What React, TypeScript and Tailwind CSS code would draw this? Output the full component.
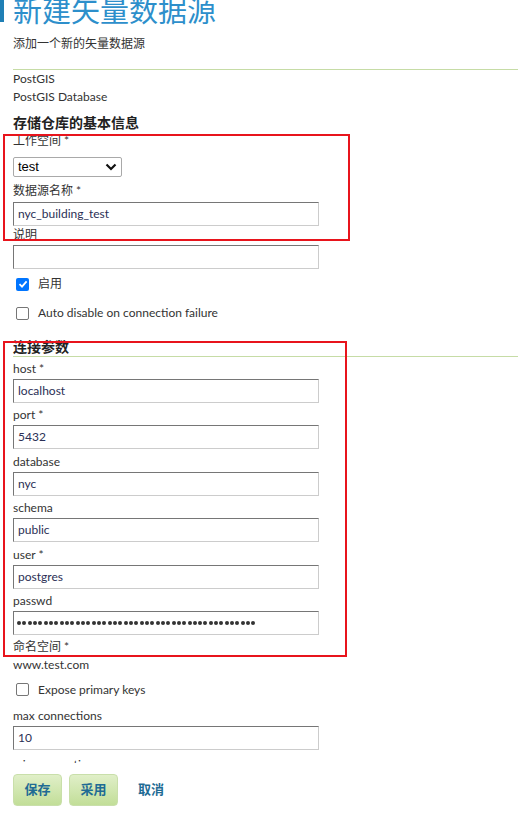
import React from "react";

const inputCls =
  "h-[24px] w-[306px] border border-t-[#767676] border-l-[#767676] border-b-[#cccccc] border-r-[#cccccc] px-[4px] flex items-center text-[12px] text-[#2b2f55] bg-white";

const Field = ({ label, value, req }: { label: string; value: string; req?: boolean }) => (
  <div className="mb-[3.4px]">
    <div className="h-[18px] leading-[18px]">
      {label}
      {req && " *"}
    </div>
    <div className={"mt-[1px] " + inputCls}>{value}</div>
  </div>
);

const Check = ({ checked }: { checked?: boolean }) =>
  checked ? (
    <span className="block w-[13px] h-[13px] rounded-[2px] bg-[#0075ff] flex items-center justify-center">
      <svg width="10" height="10" viewBox="0 0 10 10">
        <path d="M1.5 5.2 L4 7.6 L8.6 2.4" stroke="white" strokeWidth="1.8" fill="none" />
      </svg>
    </span>
  ) : (
    <span className="block w-[13px] h-[13px] rounded-[2px] border border-[#767676] bg-white" />
  );

export default function App() {
  return (
    <div
      className="relative w-[518px] h-[814px] overflow-hidden bg-white text-[12px] text-[#333]"
      style={{ fontFamily: 'Lato, "Noto Sans CJK SC", sans-serif' }}
    >
      <div className="h-[763px] overflow-hidden">
        <div className="flex h-[22px] border-l-[4px] border-[#1f7fb5] pl-[9px]">
          <h1
            className="-mt-[6px] text-[29px] leading-[30px] text-[#2d8fcb] whitespace-nowrap"
            style={{ fontFamily: '"Noto Sans CJK SC", sans-serif' }}
          >
            新建矢量数据源
          </h1>
        </div>
        <div className="px-[13px]">
          <p className="mt-[14px] leading-[16px]">添加一个新的矢量数据源</p>
          <div className="mt-[17px] h-[1px] bg-[#c6dca6] -mr-[13px]" />
          <div className="leading-[18px]">PostGIS</div>
          <div className="leading-[18px]">PostGIS Database</div>
          <h2 className="mt-[8px] text-[14px] font-bold leading-[18px] text-[#222]">存储仓库的基本信息</h2>

          <div className="h-[18px] leading-[18px]">工作空间 *</div>
          <div
            className="mt-[7px] h-[20px] w-[109px] border border-[#a9a9a9] rounded-[2px] flex items-center justify-between px-[4px] text-[13px] text-black"
            style={{ fontFamily: '"Liberation Sans", sans-serif' }}
          >
            <span>test</span>
            <svg width="12" height="8" viewBox="0 0 12 8">
              <path d="M1.5 1.5 L6 6 L10.5 1.5" stroke="#111" strokeWidth="2.2" fill="none" />
            </svg>
          </div>

          <div className="mt-[5px] h-[18px] leading-[18px]">数据源名称 *</div>
          <div className={"mt-[2px] " + inputCls}>nyc_building_test</div>
          <div className="h-[18px] leading-[18px]">说明</div>
          <div className={"mt-[1px] " + inputCls}></div>

          <div className="mt-[6px] h-[18px] flex items-center">
            <span className="ml-[3px]"><Check checked /></span>
            <span className="ml-[9px]">启用</span>
          </div>
          <div className="mt-[11px] h-[18px] flex items-center">
            <span className="ml-[3px]"><Check /></span>
            <span className="ml-[9px]">Auto disable on connection failure</span>
          </div>

          <h2 className="mt-[16px] text-[14px] font-bold leading-[18px] text-[#222] border-b border-[#c6dca6] -mr-[13px]">连接参数</h2>
          <div className="mt-[3px]">
            <Field label="host" value="localhost" req />
            <Field label="port" value="5432" req />
            <Field label="database" value="nyc" />
            <Field label="schema" value="public" />
            <Field label="user" value="postgres" req />
            <div>
              <div className="h-[18px] leading-[18px]">passwd</div>
              <div className={"mt-[1px] gap-[1.33px] " + inputCls} style={{ paddingLeft: 3 }}>
                {Array.from({ length: 45 }).map((_, i) => (
                  <span key={i} className="block w-[4px] h-[4px] rounded-full bg-[#333]" />
                ))}
              </div>
            </div>
          </div>
          <div className="mt-[3px] h-[18px] leading-[18px]">命名空间 *</div>
          <div className="h-[18px] leading-[18px]">www.test.com</div>
          <div className="mt-[7px] h-[18px] flex items-center">
            <span className="ml-[3px]"><Check /></span>
            <span className="ml-[9px]">Expose primary keys</span>
          </div>
          <div className="mt-[8px] h-[18px] leading-[18px]">max connections</div>
          <div className={"mt-[1px] " + inputCls}>10</div>
          <div className="mt-[6px] h-[18px] leading-[18px]">min connections</div>
        </div>
      </div>

      <div className="flex items-center px-[13px] pt-[11px] gap-[7px]">
        {["保存", "采用"].map((t) => (
          <button
            key={t}
            className="h-[32px] w-[49px] rounded-[4px] border border-[#c9dfaa] bg-gradient-to-b from-[#e0efc8] to-[#c2de98] text-[13px] font-bold text-[#1f6b94]"
          >
            {t}
          </button>
        ))}
        <span className="ml-[13px] text-[13px] font-bold text-[#1f6b94]">取消</span>
      </div>

      {/* annotation boxes */}
      <div className="absolute left-[3px] top-[134px] w-[347px] h-[107px] border-2 border-[#e8141c] pointer-events-none" />
      <div className="absolute left-[3px] top-[341px] w-[344px] h-[316px] border-2 border-[#e8141c] pointer-events-none" />
    </div>
  );
}
